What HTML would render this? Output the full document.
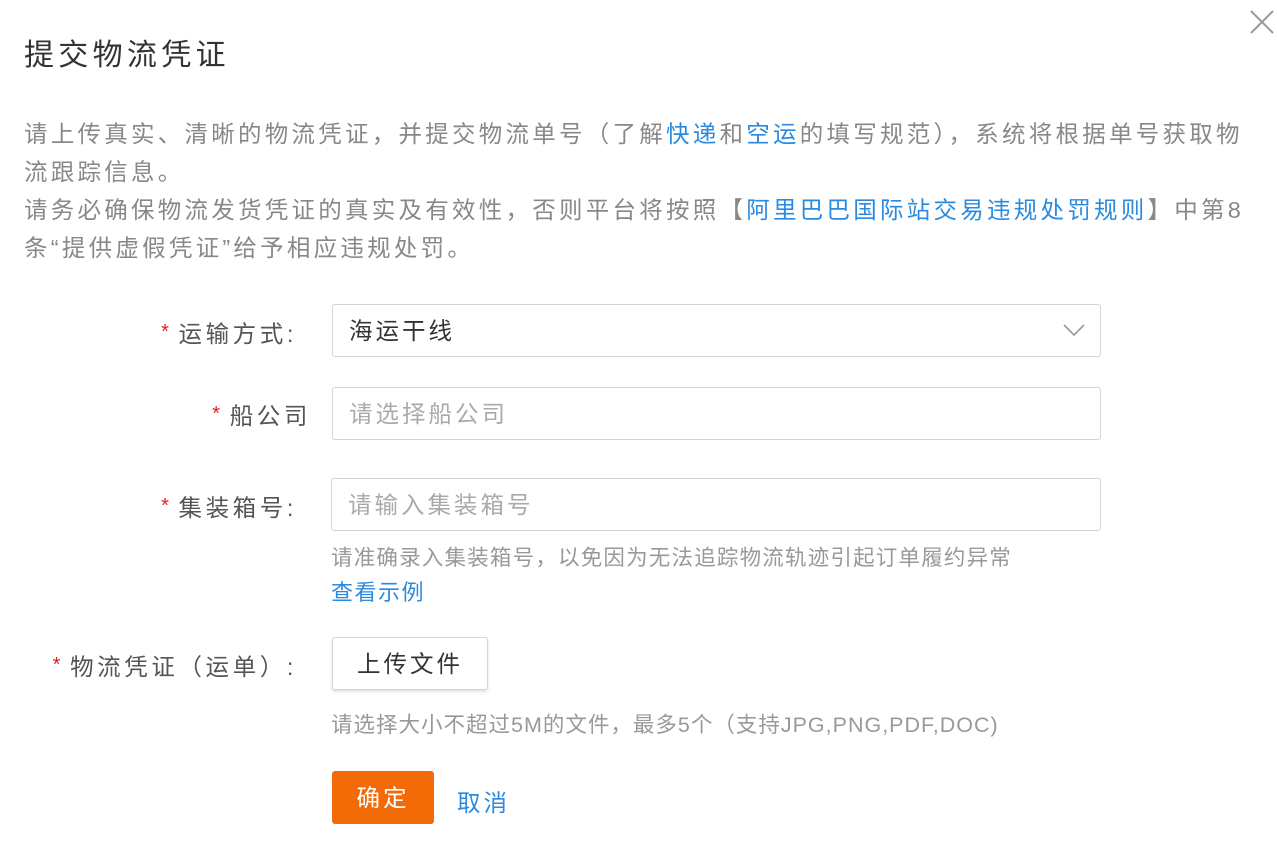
<!DOCTYPE html><html><head><meta charset="utf-8"><style>
body{margin:0;width:1277px;height:845px;background:#fff;font-family:"Liberation Sans","Noto Sans CJK SC",sans-serif;position:relative;overflow:hidden}
.a{position:absolute;white-space:nowrap}
.t{left:24px;top:30px;font-size:30px;color:#333;letter-spacing:4.3px}
.p{left:24px;top:115px;font-size:23.5px;line-height:38px;color:#888;letter-spacing:3.25px}
.p a,.b{color:#2a8ae0;text-decoration:none}
.l{font-size:23.5px;color:#555;text-align:right;right:980px;line-height:30px;letter-spacing:3.6px}
.l i{color:#e02020;font-style:normal;font-size:20px;margin-right:6px;vertical-align:4px}
.in{position:absolute;border:1px solid #d4d4d4;border-radius:3px;box-sizing:border-box;font-size:23.5px;padding-left:16px;color:#333;line-height:52px;letter-spacing:3px}
.ph{color:#aaa}
.h{font-size:21.5px;color:#999;letter-spacing:1.2px}
</style></head><body>
<div class="a t">提交物流凭证</div>
<svg class="a" style="left:1249px;top:9px" width="26" height="26"><path d="M2 2L24 24M24 2L2 24" stroke="#999" stroke-width="2"/></svg>
<div class="a p">请上传真实、清晰的物流凭证，并提交物流单号（了解<a>快递</a>和<a>空运</a>的填写规范），系统将根据单号获取物<br>流跟踪信息。<br>请务必确保物流发货凭证的真实及有效性，否则平台将按照【<a>阿里巴巴国际站交易违规处罚规则</a>】中第8<br>条“提供虚假凭证”给予相应违规处罚。</div>
<div class="a l" style="top:317px"><i>*</i>运输方式:</div>
<div class="in" style="left:332px;top:304px;width:769px;height:53px">海运干线<svg style="position:absolute;right:14px;top:17px" width="24" height="16"><path d="M2 3L12 13L22 3" stroke="#999" stroke-width="1.6" fill="none"/></svg></div>
<div class="a l" style="top:399px;right:966px"><i>*</i>船公司</div>
<div class="in ph" style="left:332px;top:387px;width:769px;height:53px">请选择船公司</div>
<div class="a l" style="top:491px"><i>*</i>集装箱号:</div>
<div class="in ph" style="left:331px;top:478px;width:770px;height:53px">请输入集装箱号</div>
<div class="a h" style="left:331px;top:541px">请准确录入集装箱号，以免因为无法追踪物流轨迹引起订单履约异常</div>
<div class="a b" style="left:331px;top:575px;font-size:22px;letter-spacing:1.5px">查看示例</div>
<div class="a l" style="top:650px"><i>*</i>物流凭证（运单）:</div>
<div class="in" style="left:332px;top:637px;width:156px;height:53px;padding:0;text-align:center;box-shadow:0 2px 3px rgba(0,0,0,.12)">上传文件</div>
<div class="a h" style="left:331px;top:708px;letter-spacing:1px">请选择大小不超过5M的文件，最多5个（支持JPG,PNG,PDF,DOC)</div>
<div class="in" style="left:332px;top:771px;width:102px;height:53px;padding:0;text-align:center;background:#f26b07;border-color:#f26b07;color:#fff">确定</div>
<div class="a b" style="left:457px;top:784px;font-size:23.5px;letter-spacing:3px">取消</div>
</body></html>
